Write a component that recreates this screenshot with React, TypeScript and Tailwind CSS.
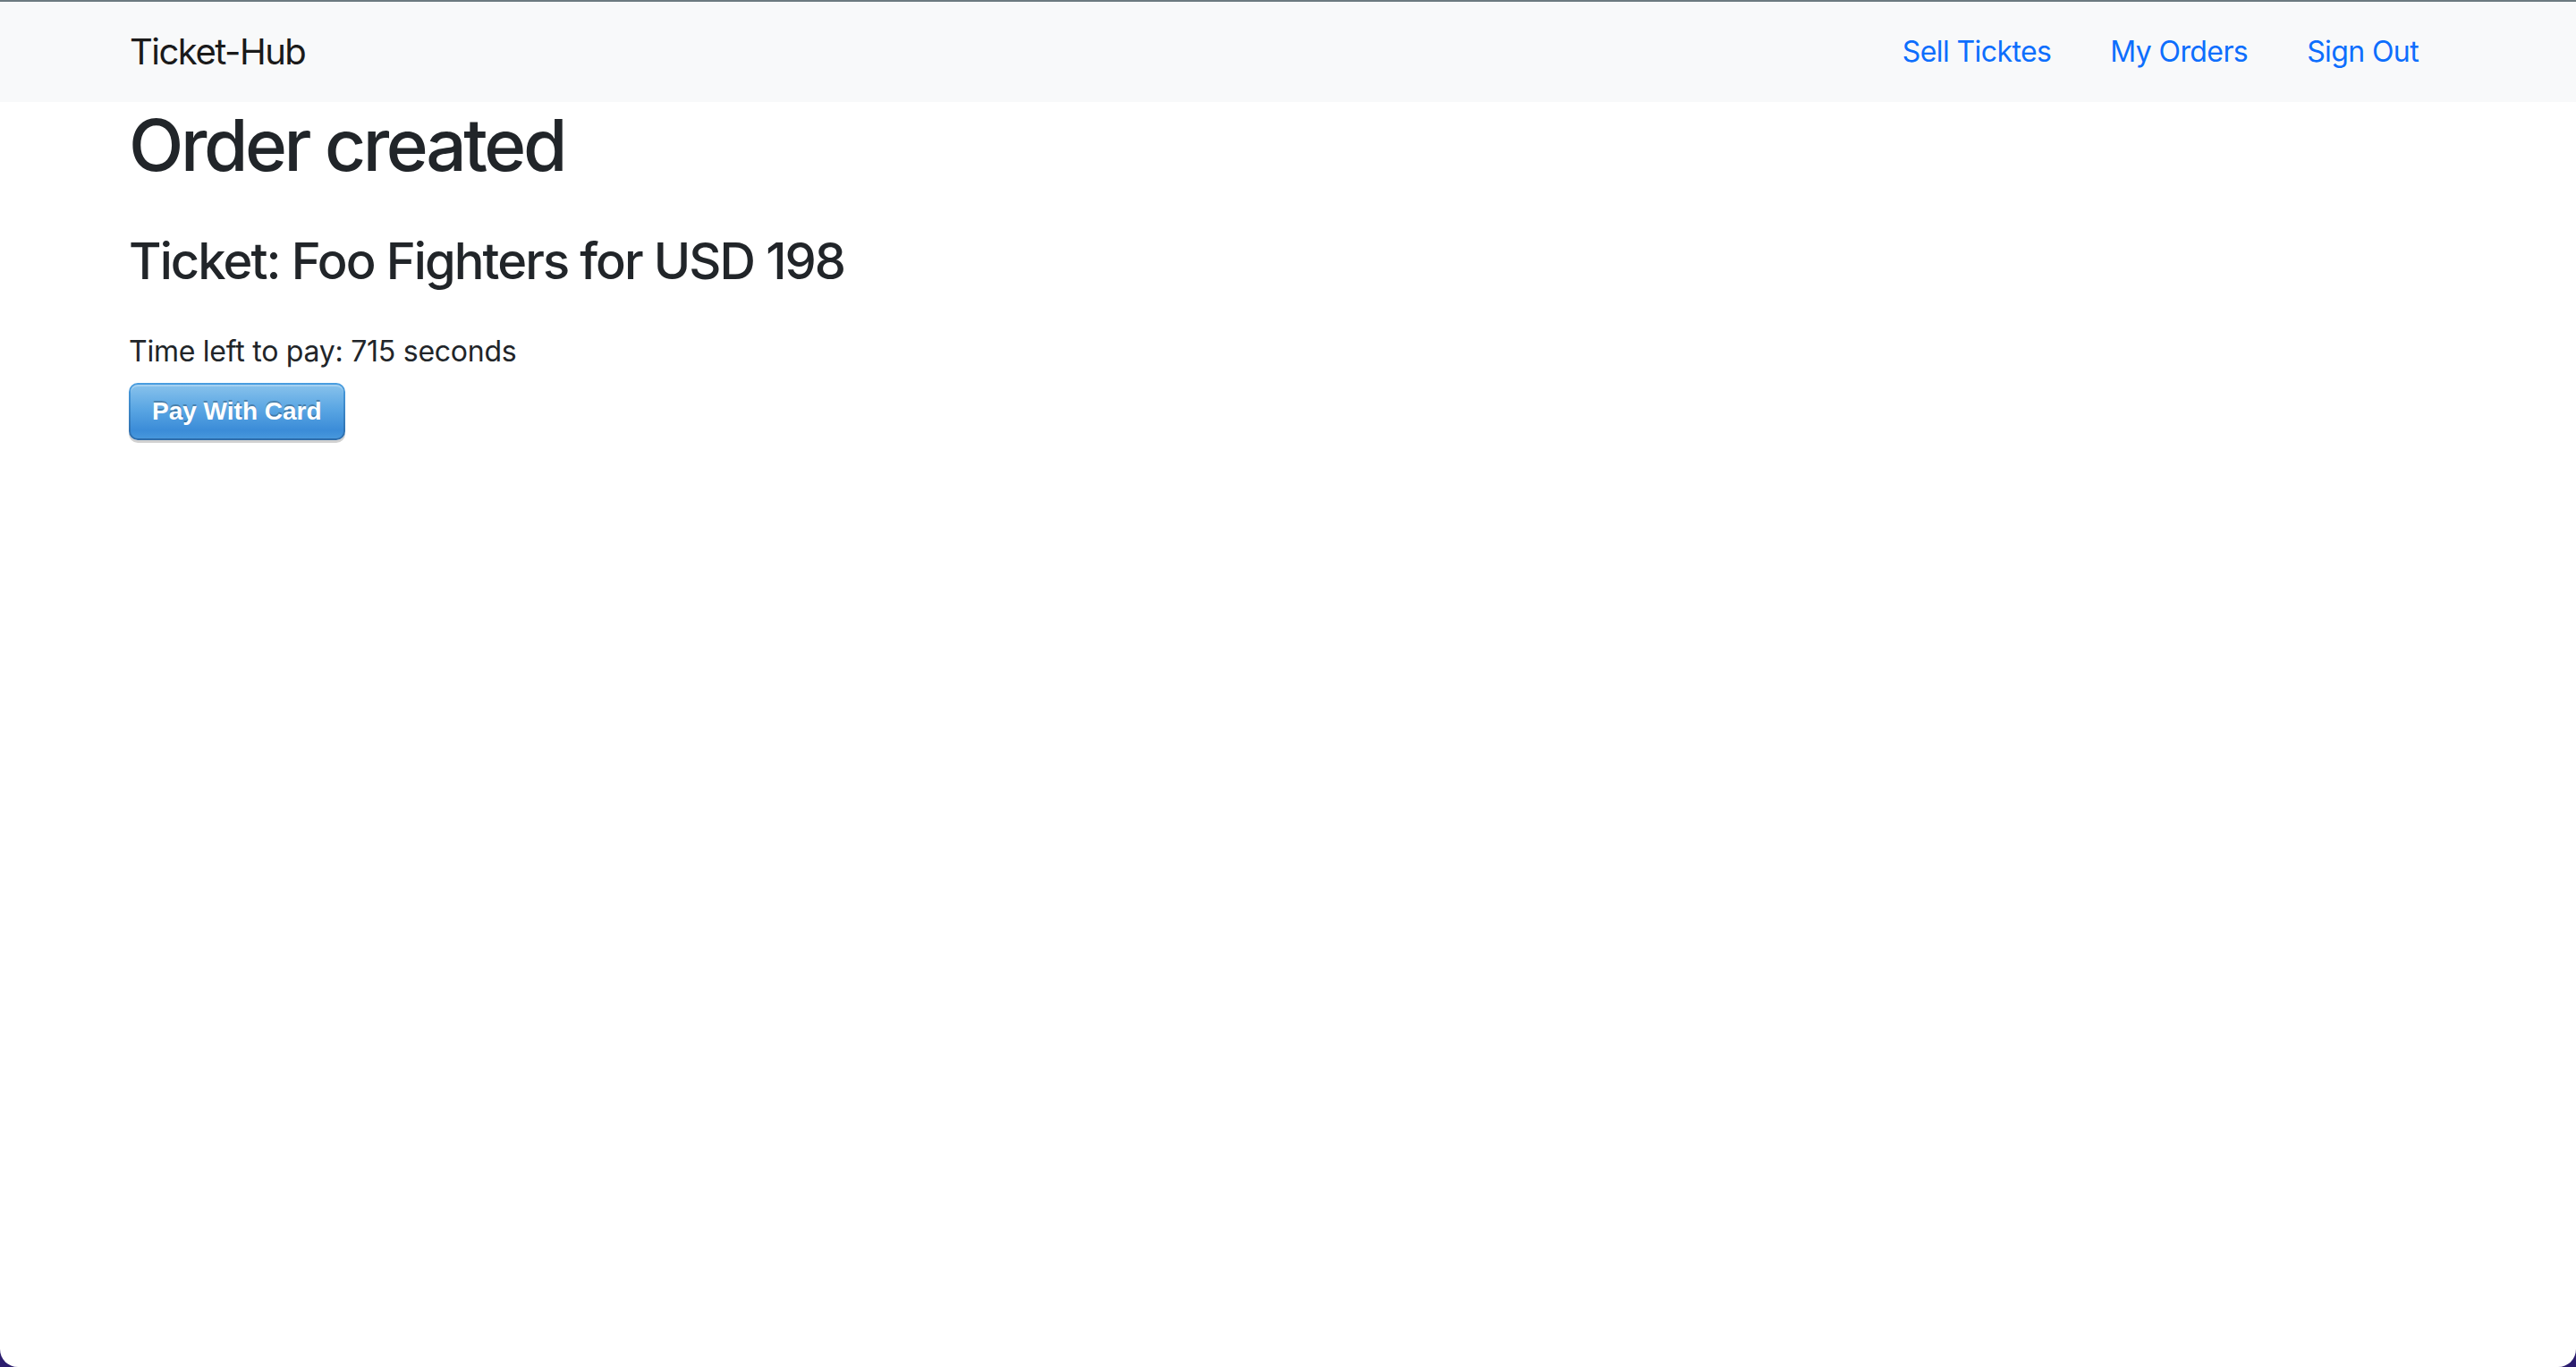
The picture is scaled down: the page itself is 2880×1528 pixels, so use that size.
import React from "react";

const font = { fontFamily: "Inter, 'Noto Sans', sans-serif" };

function NavBar() {
  return (
    <nav className="flex h-[112px] items-center justify-between bg-[#f8f9fa] pl-[145px] pr-[176px]">
      <a href="/" className="text-[40px] leading-[60px] tracking-[-1.5px] text-[#1a1a1a]">
        Ticket-Hub
      </a>
      <ul className="flex items-center gap-[66px] text-[32px] leading-[48px] tracking-[-0.6px] text-[#0d6efd]">
        <li>
          <a href="/tickets/new">Sell Ticktes</a>
        </li>
        <li>
          <a href="/orders">My Orders</a>
        </li>
        <li>
          <a href="/auth/signout">Sign Out</a>
        </li>
      </ul>
    </nav>
  );
}

function PayButton() {
  return (
    <button className="inline-block rounded-[10px] bg-gradient-to-b from-[#4a9ee0] to-[#2c6cab] p-[2px] shadow-[0_3px_0_rgba(0,0,0,0.18)]">
      <span
        className="block h-[60px] rounded-[8px] bg-[linear-gradient(#88c2ec,#5aa6e3_45%,#3b8cd8_85%,#4797dc)] px-[24px] text-[28px] font-bold leading-[60px] text-white shadow-[inset_0_2px_0_rgba(255,255,255,0.25)] [text-shadow:0_-2px_0_rgba(0,0,0,0.25)]"
        style={{ fontFamily: "'Liberation Sans', Arial, sans-serif" }}
      >
        Pay With Card
      </span>
    </button>
  );
}

export default function App() {
  return (
    <div className="flex h-screen flex-col bg-[#2b1d6e]" style={font}>
      <div className="flex flex-1 flex-col overflow-hidden rounded-b-[20px] border-t-2 border-[#6c7a80] bg-white text-[#212529]">
        <NavBar />
        <main className="pl-[144px]">
          <h1 className="text-[80px] font-medium leading-[96px] tracking-[-3.4px]">Order created</h1>
          <h3 className="mt-[49px] text-[56px] font-medium leading-[67px] tracking-[-1.9px]">
            Ticket: Foo Fighters for USD 198
          </h3>
          <div className="mt-[43px] text-[32px] leading-[48px] tracking-[-0.25px]">
            Time left to pay: 715 seconds
          </div>
          <div className="mt-[11px]">
            <PayButton />
          </div>
        </main>
      </div>
    </div>
  );
}
